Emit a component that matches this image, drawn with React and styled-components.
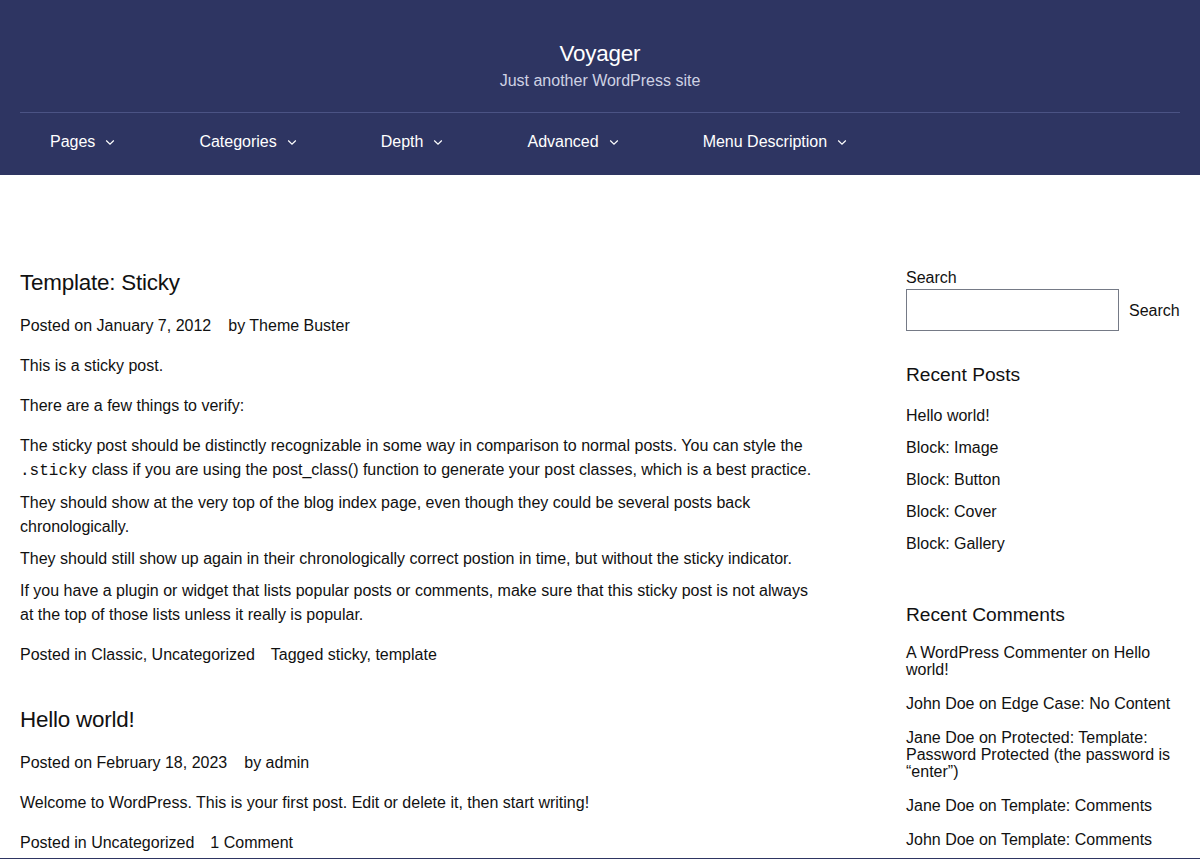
import React from "react";
import styled, { createGlobalStyle } from "styled-components";

const Global = createGlobalStyle`
  * { box-sizing: border-box; }
  html, body { margin: 0; padding: 0; background: #fff; }
  body {
    font-family: "Liberation Sans", Arial, Helvetica, sans-serif;
    font-size: 16px;
    line-height: 24px;
    color: #111;
  }
  a { color: inherit; text-decoration: none; }
`;

const Header = styled.header`
  background: #2e3562;
  color: #fff;
  padding-top: 40px;
`;

const Container = styled.div`
  padding: 0 20px;
`;

const Branding = styled.div`
  text-align: center;
  padding-bottom: 19px;
`;

const SiteTitle = styled.div`
  font-size: 22.4px;
  line-height: 28px;
  letter-spacing: -0.2px;
`;

const Tagline = styled.div`
  font-size: 16px;
  line-height: 24px;
  color: #cfd2e4;
  margin-top: 1px;
`;

const Nav = styled.nav`
  border-top: 1px solid #4b5384;
  padding: 17px 0 21px;
`;

const NavList = styled.ul`
  display: flex;
  gap: 24px;
  list-style: none;
  margin: 0;
  padding: 0;
`;

const NavItem = styled.li`
  display: flex;
  align-items: center;
  padding: 0 30px;
  line-height: 24px;
  color: #fff;
`;

const Chevron = styled.svg`
  margin-left: 10px;
  margin-top: 1px;
`;

const Layout = styled.div`
  display: grid;
  grid-template-columns: 800px 274px;
  justify-content: space-between;
  padding: 91px 20px 3px;
`;

const Main = styled.main``;

const Post = styled.article`
  margin-bottom: 36px;
  &:last-child { margin-bottom: 0; }
  & > :last-child { margin-bottom: 0; }
`;

const PostTitle = styled.h2`
  font-size: 22.4px;
  font-weight: 400;
  line-height: 34px;
  margin: 0 0 14px;
  letter-spacing: -0.2px;
`;

const Meta = styled.div`
  display: flex;
  flex-wrap: wrap;
  column-gap: ${(p) => p.$gap || 16}px;
  margin: 0 0 16px;
`;

const Para = styled.p`
  margin: 0 0 16px;
`;

const List = styled.ul`
  list-style: none;
  margin: 0 0 16px;
  padding: 0;
  display: flex;
  flex-direction: column;
  gap: 8px;
`;

const Code = styled.code`
  font-family: "Liberation Mono", "Courier New", monospace;
  font-size: 16px;
`;

const Sidebar = styled.aside``;

const Widget = styled.section`
  margin-bottom: ${(p) => p.$space || 0}px;
`;

const Label = styled.label`
  display: block;
  line-height: 23px;
`;

const SearchRow = styled.div`
  display: flex;
  align-items: center;
`;

const Input = styled.input`
  width: 213px;
  height: 42px;
  border: 1px solid #757a86;
  border-radius: 0;
  padding: 0 8px;
  font: inherit;
`;

const Button = styled.button`
  background: transparent;
  border: 0;
  padding: 2px 0 0 10px;
  font: inherit;
  color: #111;
  line-height: 24px;
`;

const WidgetTitle = styled.h2`
  font-size: 19.2px;
  font-weight: 400;
  line-height: 28px;
  margin: 0 0 15px;
`;

const WidgetList = styled.ul`
  list-style: none;
  margin: 0;
  padding: 0;
  display: flex;
  flex-direction: column;
  gap: ${(p) => p.$gap}px;
  line-height: ${(p) => p.$lh}px;
`;

const Footer = styled.footer`
  background: #2e3562;
  height: 80px;
`;

const navItems = ["Pages", "Categories", "Depth", "Advanced", "Menu Description"];

const recentPosts = ["Hello world!", "Block: Image", "Block: Button", "Block: Cover", "Block: Gallery"];

const recentComments = [
  ["A WordPress Commenter", "Hello world!"],
  ["John Doe", "Edge Case: No Content"],
  ["Jane Doe", "Protected: Template: Password Protected (the password is \u201Center\u201D)"],
  ["Jane Doe", "Template: Comments"],
  ["John Doe", "Template: Comments"],
];

export default function App() {
  return (
    <>
      <Global />
      <Header>
        <Container>
          <Branding>
            <SiteTitle>Voyager</SiteTitle>
            <Tagline>Just another WordPress site</Tagline>
          </Branding>
          <Nav>
            <NavList>
              {navItems.map((n) => (
                <NavItem key={n}>
                  <a href="#">{n}</a>
                  <Chevron width="10" height="7" viewBox="0 0 10 7" fill="none">
                    <path d="M1.2 1.5L5 5.2L8.8 1.5" stroke="#fff" strokeWidth="1.2" />
                  </Chevron>
                </NavItem>
              ))}
            </NavList>
          </Nav>
        </Container>
      </Header>

      <Layout>
        <Main>
          <Post>
            <PostTitle>Template: Sticky</PostTitle>
            <Meta $gap={17}>
              <span>Posted on January 7, 2012</span>
              <span>by Theme Buster</span>
            </Meta>
            <Para>This is a sticky post.</Para>
            <Para>There are a few things to verify:</Para>
            <List>
              <li>
                The sticky post should be distinctly recognizable in some way in comparison to normal posts. You can style the{" "}
                <Code>.sticky</Code> class if you are using the post_class() function to generate your post classes, which is a best practice.
              </li>
              <li>They should show at the very top of the blog index page, even though they could be several posts back chronologically.</li>
              <li>They should still show up again in their chronologically correct postion in time, but without the sticky indicator.</li>
              <li>
                If you have a plugin or widget that lists popular posts or comments, make sure that this sticky post is not always at the top of those lists unless it really is popular.
              </li>
            </List>
            <Meta>
              <span>Posted in Classic, Uncategorized</span>
              <span>Tagged sticky, template</span>
            </Meta>
          </Post>

          <Post>
            <PostTitle>Hello world!</PostTitle>
            <Meta $gap={17}>
              <span>Posted on February 18, 2023</span>
              <span>by admin</span>
            </Meta>
            <Para>Welcome to WordPress. This is your first post. Edit or delete it, then start writing!</Para>
            <Meta>
              <span>Posted in Uncategorized</span>
              <span>1 Comment</span>
            </Meta>
          </Post>
        </Main>

        <Sidebar>
          <Widget $space={30}>
            <Label htmlFor="s">Search</Label>
            <SearchRow>
              <Input id="s" type="text" />
              <Button type="button">Search</Button>
            </SearchRow>
          </Widget>

          <Widget $space={45}>
            <WidgetTitle>Recent Posts</WidgetTitle>
            <WidgetList $gap={8} $lh={24}>
              {recentPosts.map((p) => (
                <li key={p}>
                  <a href="#">{p}</a>
                </li>
              ))}
            </WidgetList>
          </Widget>

          <Widget>
            <WidgetTitle>Recent Comments</WidgetTitle>
            <WidgetList $gap={17} $lh={17}>
              {recentComments.map(([a, p], i) => (
                <li key={i}>
                  {a} on <a href="#">{p}</a>
                </li>
              ))}
            </WidgetList>
          </Widget>
        </Sidebar>
      </Layout>
      <Footer />
    </>
  );
}
